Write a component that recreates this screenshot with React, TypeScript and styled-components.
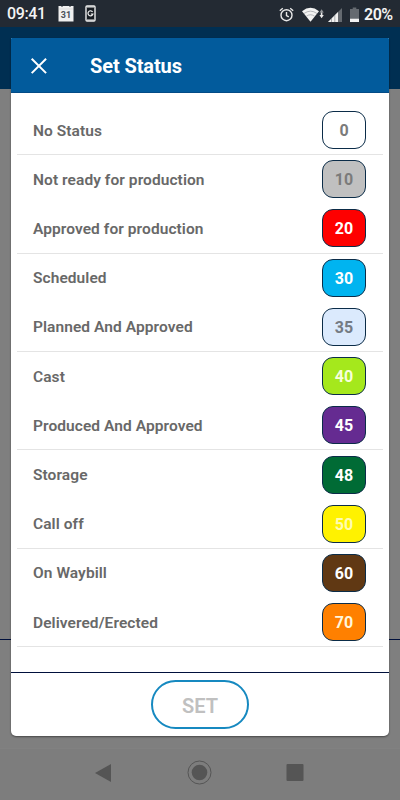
import React from "react";
import styled, { createGlobalStyle } from "styled-components";

const GlobalStyle = createGlobalStyle`
  * { box-sizing: border-box; }
  body { margin: 0; font-family: Roboto, "Liberation Sans", sans-serif; }
`;

const Screen = styled.div`
  position: relative;
  width: 400px;
  height: 800px;
  display: flex;
  flex-direction: column;
  overflow: hidden;
  background: #7f7f7f;
`;

const StatusBar = styled.header`
  height: 27px;
  padding: 0 6px 0 7px;
  display: flex;
  align-items: center;
  background: #232a33;
  color: #f4f4f4;
  font-size: 16px;
  font-weight: 500;
  line-height: 28px;
`;

const Clock = styled.span`
  width: 51px;
  padding-top: 1px;
  letter-spacing: -0.4px;
`;

const StatusIcons = styled.div`
  display: flex;
  align-items: center;
  gap: 11px;
`;

const SystemIcons = styled.div`
  margin-left: auto;
  display: grid;
  grid-template-columns: 23px 26px 22px 14px 30px;
  align-items: center;
  height: 27px;
`;

const Battery = styled.span`
  padding-top: 1px;
  font-size: 16px;
  font-weight: 600;
  letter-spacing: -0.5px;
  white-space: nowrap;
`;

const AppHeader = styled.div`
  height: 62px;
  background: #002f52;
`;

const Backdrop = styled.main`
  height: 551px;
  border-bottom: 1px solid #00103c;
`;

const BackdropFooter = styled.div`
  flex: 1;
`;

const NavBar = styled.nav`
  height: 52px;
  padding: 0 96px 4px 95px;
  display: flex;
  align-items: center;
  justify-content: space-between;
  background: #7d7d7d;
  border-top: 1px solid #818181;
`;

const Dialog = styled.section`
  position: absolute;
  inset: 38px 11px 64px;
  display: flex;
  flex-direction: column;
  overflow: hidden;
  background: #fff;
  border-radius: 1px 1px 5px 5px;
  box-shadow: 0 1px 2px rgba(0, 0, 0, 0.45);
`;

const DialogHeader = styled.div`
  height: 55px;
  flex: none;
  display: flex;
  align-items: center;
  gap: 42px;
  padding-left: 19px;
  background: #025b9c;
  border-bottom: 1px solid #034b86;
  color: #fff;
`;

const CloseButton = styled.button`
  display: flex;
  padding: 1px 0 0;
  border: 0;
  background: none;
  color: inherit;
`;

const Title = styled.h1`
  margin: 2px 0 0;
  font-size: 20px;
  letter-spacing: -0.1px;
  font-weight: 700;
  line-height: 24px;
`;

const StatusList = styled.ul`
  flex: 1;
  margin: 0;
  padding: 12.9px 6px 0;
  list-style: none;
`;

const StatusRow = styled.li<{ $divided: boolean }>`
  height: 49.23px;
  padding: 0 17px 0 16px;
  display: flex;
  align-items: center;
  justify-content: space-between;
  border-bottom: 1px solid ${(p) => (p.$divided ? "#e4e4e4" : "transparent")};
  color: #686868;
  font-size: 15.5px;
  font-weight: 600;
  letter-spacing: 0.07px;
`;

const Label = styled.span`
  padding-top: 1px;
`;

const Badge = styled.span<{ $fill: string; $ink: string }>`
  width: 44px;
  height: 38px;
  padding-top: 1px;
  display: flex;
  align-items: center;
  justify-content: center;
  border: 1px solid #0b2c48;
  border-radius: 11px;
  background: ${(p) => p.$fill};
  color: ${(p) => p.$ink};
  font-size: 16px;
  font-weight: 700;
`;

const DialogFooter = styled.div`
  height: 64px;
  display: flex;
  align-items: center;
  justify-content: center;
  border-top: 1px solid #00103c;
`;

const SetButton = styled.button`
  width: 98px;
  height: 49px;
  padding: 2px 0 0;
  border: 2px solid #1689c0;
  border-radius: 25px;
  background: #fff;
  color: #c0c0c0;
  font: 600 20px Roboto, sans-serif;
`;

type Status = { label: string; code: number; fill: string; ink: string };

const statuses: Status[] = [
  { label: "No Status", code: 0, fill: "#ffffff", ink: "#7b7b7b" },
  { label: "Not ready for production", code: 10, fill: "#c0c0c0", ink: "#7b7b7b" },
  { label: "Approved for production", code: 20, fill: "#fe0000", ink: "#ffffff" },
  { label: "Scheduled", code: 30, fill: "#00b4f0", ink: "#ffffff" },
  { label: "Planned And Approved", code: 35, fill: "#dbeafd", ink: "#747b84" },
  { label: "Cast", code: 40, fill: "#a5e81c", ink: "#f7ffdc" },
  { label: "Produced And Approved", code: 45, fill: "#652b91", ink: "#ffffff" },
  { label: "Storage", code: 48, fill: "#006b35", ink: "#ffffff" },
  { label: "Call off", code: 50, fill: "#fff200", ink: "#fffcb0" },
  { label: "On Waybill", code: 60, fill: "#603813", ink: "#ffffff" },
  { label: "Delivered/Erected", code: 70, fill: "#ff8000", ink: "#fff6dc" },
];

const CalendarIcon = () => (
  <svg width="16" height="17" viewBox="0 0 16 17">
    <path d="M.5 1H3l1 1 1-1h6l1 1 1-1h2.5v15.5H.5z" fill="#f0f0f0" />
    <path d="M1 4h14" stroke="#dcdcdc" />
    <text x="8" y="13" textAnchor="middle" fontSize="9" fontWeight="700" fill="#4b5158">31</text>
  </svg>
);

const PhoneIcon = () => (
  <svg width="11" height="17" viewBox="0 0 11 17" fill="none" stroke="#ededed">
    <rect x="1" y="1" width="9" height="15" rx="1" fill="#171c22" strokeWidth="1.4" />
    <path d="M2 2h7M2 15h7" strokeWidth="1.2" />
    <path d="M7.6 6.9a2.5 2.5 0 1 0 .3 2.1H5.8" strokeWidth="1.2" />
  </svg>
);

const AlarmIcon = () => (
  <svg width="15" height="15" viewBox="0 0 15 15" fill="none" stroke="#e8e8e8" strokeWidth="1.4">
    <circle cx="7.5" cy="8.2" r="5.5" />
    <path d="M7.5 5v3.5l2.3 1.4M.8 3.7l3-2.5M14.2 3.7l-3-2.5" />
  </svg>
);

const WifiIcon = () => (
  <svg width="23" height="15" viewBox="0 0 23 15">
    <path d="M0 4.2Q8.5-2.6 17 4.2L8.5 14.8z" fill="#f2f2f2" />
    <path d="M2 6.5Q8.5 1.8 15 6.5M4.3 9.3Q8.5 6.2 12.7 9.3" fill="none" stroke="#8b8f94" strokeWidth=".6" />
    <path d="M17.4 5.5l2.2-3.2 2.2 3.2z" fill="#92969a" />
    <path d="M18.8 5.5h1.6V8h1.4l-2.2 3.2L17.4 8h1.4z" fill="#e8e8e8" />
  </svg>
);

const SignalIcon = () => (
  <svg width="14" height="14" viewBox="0 0 14 14">
    <path d="M0 14L14 0v14z" fill="#656a70" />
    <path d="M0 14L10 4v10z" fill="#f0f0f0" />
    <path d="M3.5 10v4M6.8 7v7" stroke="#777c81" strokeWidth=".6" />
  </svg>
);

const BatteryIcon = () => (
  <svg width="9" height="15" viewBox="0 0 9 15">
    <path d="M0 2h2.7V.5h3.6V2H9v9H0z" fill="#656a70" />
    <path d="M0 11.5h9V15H0z" fill="#f2f2f2" />
  </svg>
);

export default function App() {
  return (
    <Screen>
      <GlobalStyle />
      <StatusBar>
        <Clock>09:41</Clock>
        <StatusIcons>
          <CalendarIcon />
          <PhoneIcon />
        </StatusIcons>
        <SystemIcons>
          <AlarmIcon />
          <WifiIcon />
          <SignalIcon />
          <BatteryIcon />
          <Battery>20%</Battery>
        </SystemIcons>
      </StatusBar>
      <AppHeader />
      <Backdrop />
      <BackdropFooter />
      <NavBar>
        <svg width="17" height="18" viewBox="0 0 17 18"><path d="M0 9L16 0v18z" fill="#555" /></svg>
        <svg width="25" height="25" viewBox="0 0 25 25">
          <circle cx="12.5" cy="12.5" r="11.5" fill="none" stroke="#555" strokeWidth="1" />
          <circle cx="12.5" cy="12.5" r="7.8" fill="#555" />
        </svg>
        <svg width="18" height="17" viewBox="0 0 18 17"><rect x=".5" width="17" height="17" rx="1" fill="#555" /></svg>
      </NavBar>
      <Dialog role="dialog" aria-label="Set Status">
        <DialogHeader>
          <CloseButton aria-label="Close">
            <svg width="18" height="18" viewBox="0 0 18 18">
              <path d="M1.7 1.7l14.4 14.4M16.1 1.7L1.7 16.1" stroke="currentColor" strokeWidth="2" />
            </svg>
          </CloseButton>
          <Title>Set Status</Title>
        </DialogHeader>
        <StatusList>
          {statuses.map((s, i) => (
            <StatusRow key={s.code} $divided={i % 2 === 0}>
              <Label>{s.label}</Label>
              <Badge $fill={s.fill} $ink={s.ink}>{s.code}</Badge>
            </StatusRow>
          ))}
        </StatusList>
        <DialogFooter>
          <SetButton>SET</SetButton>
        </DialogFooter>
      </Dialog>
    </Screen>
  );
}
